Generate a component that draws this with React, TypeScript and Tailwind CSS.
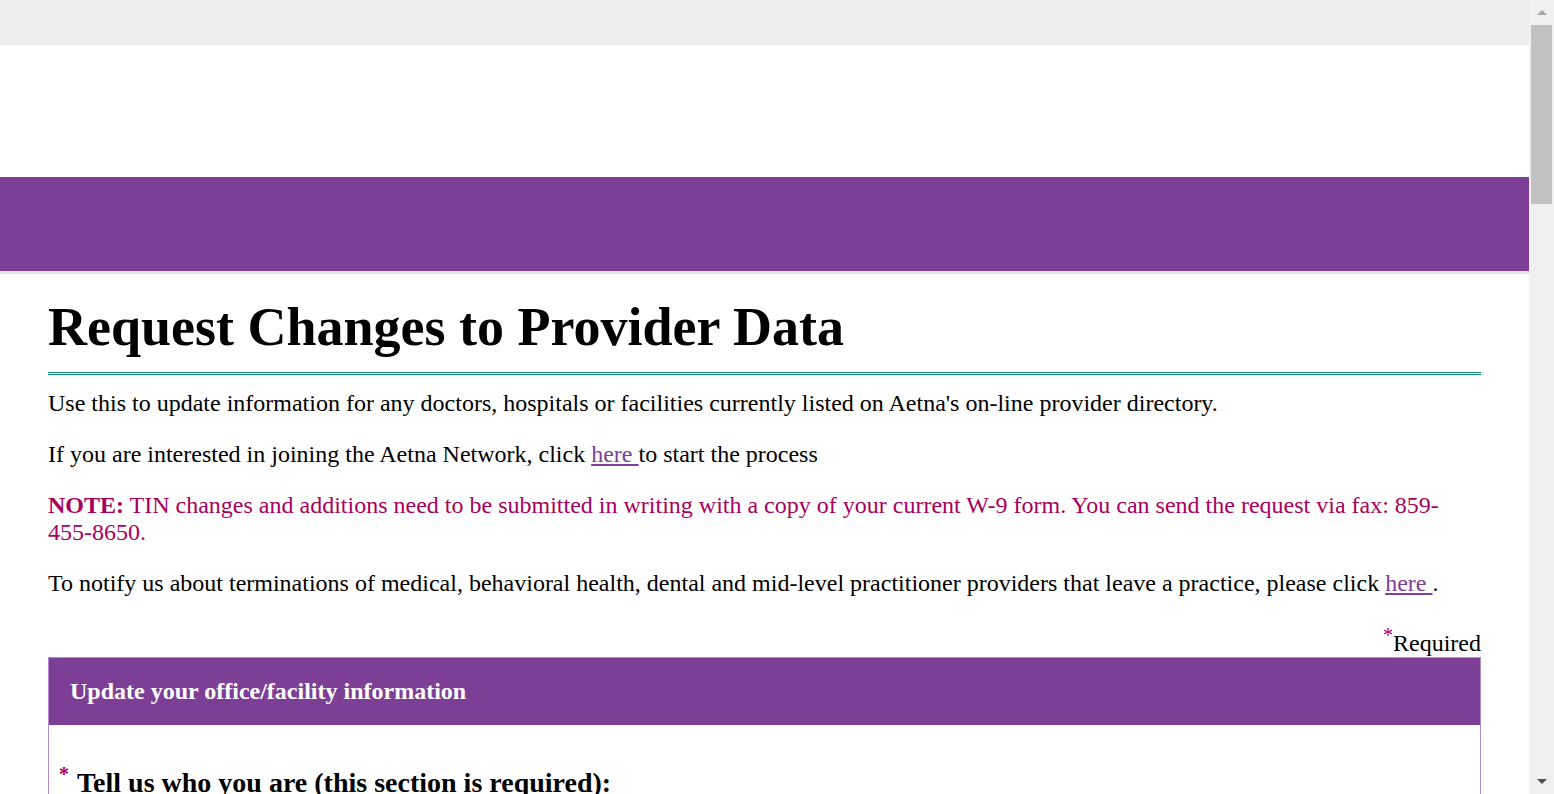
import React from 'react';

const serif = { fontFamily: '"Liberation Serif", "Times New Roman", serif' };

const Scrollbar: React.FC = () => (
  <div className="w-[25px] h-full bg-[#f0f0f0] flex flex-col items-center shrink-0">
    <div className="h-[25px] w-full flex items-center justify-center">
      <div className="w-0 h-0 border-x-[5px] border-x-transparent border-b-[5px] border-b-[#a3a3a3]" />
    </div>
    <div className="w-[21px] h-[179px] bg-[#c1c1c1]" />
    <div className="flex-1" />
    <div className="h-[25px] w-full flex items-center justify-center">
      <div className="w-0 h-0 border-x-[5px] border-x-transparent border-t-[5px] border-t-[#505050]" />
    </div>
  </div>
);

const App: React.FC = () => {
  return (
    <div className="flex w-[1554px] h-[794px] overflow-hidden bg-white" style={serif}>
      <div className="flex-1 overflow-hidden">
        {/* header */}
        <div className="h-[45px] bg-[#ededed]" />
        <div className="h-[132px] bg-white" />
        <div className="h-[94px] bg-[#7d3f96]" />
        <div className="h-[3px] bg-[#e3e3e3]" />

        <main className="px-[48px] text-[24px] leading-[27px] text-black">
          <h1 className="mt-[21px] text-[54px] leading-[64px] font-bold">
            Request Changes to Provider Data
          </h1>
          <div className="mt-[13px] h-[3px] border-y border-[#0f8a75]" />

          <p className="mt-[15px]">
            Use this to update information for any doctors, hospitals or facilities currently listed on Aetna's on-line provider directory.
          </p>
          <p className="mt-[24px]">
            If you are interested in joining the Aetna Network, click{' '}
            <a href="#" className="text-[#7d3f98] underline decoration-[#7d3f98]">here </a>
            to start the process
          </p>
          <p className="mt-[24px] text-[#a8005e]">
            <strong>NOTE:</strong> TIN changes and additions need to be submitted in writing with a copy of your current W-9 form. You can send the request via fax: 859-455-8650.
          </p>
          <p className="mt-[24px]">
            To notify us about terminations of medical, behavioral health, dental and mid-level practitioner providers that leave a practice, please click{' '}
            <a href="#" className="text-[#7d3f98] underline decoration-[#7d3f98]">here </a>.
          </p>

          <div className="mt-[28px] text-right">
            <span className="text-[#a8005e] text-[20px] align-super leading-none">*</span>Required
          </div>

          <section className="border border-[#b58ccb]">
            <div className="h-[67px] bg-[#7d3f96] flex items-center pl-[21px]">
              <h2 className="text-white text-[24px] font-bold">Update your office/facility information</h2>
            </div>
            <div className="pl-[10px] pt-[42px] pb-[40px]">
              <h3 className="text-[28px] leading-[32px] font-bold flex items-start">
                <span className="text-[#a8005e] text-[20px] leading-none mr-[8px] mt-[-3px]">*</span>
                Tell us who you are (this section is required):
              </h3>
            </div>
          </section>
        </main>
      </div>
      <Scrollbar />
    </div>
  );
};

export default App;
